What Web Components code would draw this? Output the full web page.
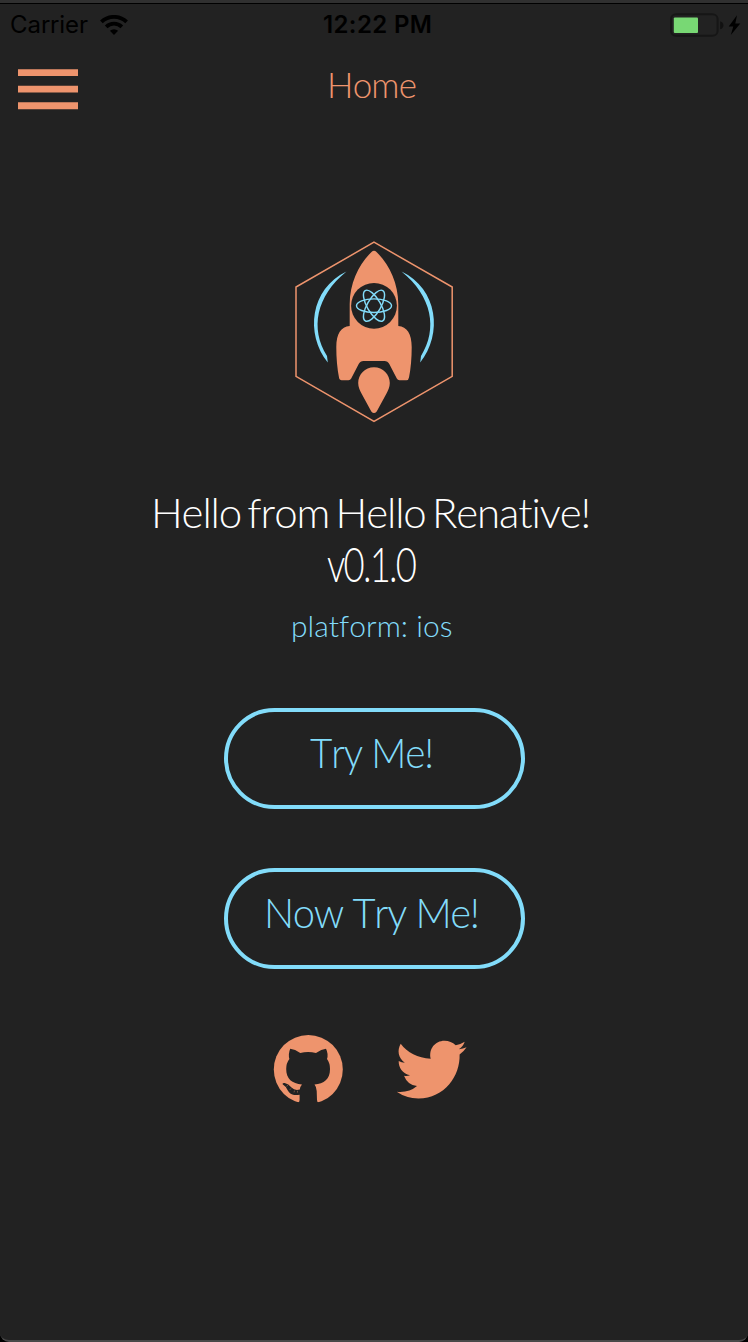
<!DOCTYPE html>
<html lang="en">
<head>
<meta charset="utf-8">
<title>Home</title>
<style>
html,body{margin:0;background:#000;height:100%}
</style>
</head>
<body>
<app-screen></app-screen>
<script>
const define = (name, html, init) => {
  const t = document.createElement('template');
  t.innerHTML = html;
  customElements.define(name, class extends HTMLElement {
    constructor() {
      super();
      this.attachShadow({mode: 'open'}).appendChild(t.content.cloneNode(true));
    }
    connectedCallback() { if (init) init(this); }
  });
};

/* One line of text, tracked so that it spans the given width.
   The optional scale attribute condenses the glyphs as well. */
define('fit-text', `<style>
:host{display:block;white-space:nowrap;font-kerning:none}
span{display:inline-block;transform-origin:0 50%}
</style><span><slot></slot></span>`, el => {
  const span = el.shadowRoot.querySelector('span');
  const gaps = el.textContent.length - 1;
  const width = Number(el.getAttribute('width'));
  const scale = Number(el.getAttribute('scale') || 1);
  const step = (width / scale - span.getBoundingClientRect().width) / gaps;
  span.style.letterSpacing = step + 'px';
  span.style.transform = scale === 1 ? 'none' : 'scaleX(' + scale + ')';
  el.style.width = width + 'px';
});

define('status-bar', `<style>
:host{display:flex;box-sizing:border-box;height:42px;padding:0 7px 0 10px;align-items:center;justify-content:space-between;font:24px/42px Inter,sans-serif;color:#000}
.side{display:flex;align-items:center;width:300px}
.end{justify-content:flex-end}
.time{font-weight:600;margin-left:4px}
svg{display:block}
.wifi{margin-left:11.500px}
</style>
<div class="side"><fit-text width="78">Carrier</fit-text>
<svg class="wifi" width="28" height="20" viewBox="0 0 28 20"><g fill="none" stroke="#000" stroke-width="3.8"><path d="M1.4 6.9a18.2 18.2 0 0 1 25.2 0"/><path d="M6.2 11.8a11.3 11.3 0 0 1 15.6 0"/></g><path d="M14 20l-4.1-4.2a6 6 0 0 1 8.2 0z"/></svg></div>
<fit-text class="time" width="109">12:22 PM</fit-text>
<div class="side end"><svg width="72" height="24" viewBox="0 0 72 24"><rect x="2" y="1.3" width="46.600" height="21.400" rx="5" fill="none" stroke="#161616" stroke-width="2"/><rect x="4.800" y="4.600" width="24.200" height="15.400" rx="1" fill="#78d874"/><path d="M51.200 8.200q3.200 1 3.200 4t-3.200 4z" fill="#111"/><path d="M68 2.200L59.700 13.500h4.600l-2.500 8.500 9.500-11.500h-5z"/></svg></div>`);

define('nav-bar', `<style>
:host{display:grid;grid-template-columns:60px 1fr 60px;height:86px;box-sizing:border-box;padding:17px 22px 0 18px;font:300 35px/42px Lato,sans-serif;color:#ee946d;justify-items:center}
svg{display:block;margin-top:6px}
</style>
<svg width="60" height="41" viewBox="0 0 60 41" fill="#ee946d"><path d="M0 .2h60v6.800H0zM0 16.700h60v6.800H0zM0 33.300h60v6.900H0z"/></svg>
<slot></slot>`);

define('rocket-logo', `<style>:host{display:block}svg{display:block}</style>
<svg width="180" height="200" viewBox="0 0 180 200">
<path d="M90 12.200L168.200 57V146.300L90 191.500 12 146.300V57z" fill="none" stroke="#ee946d" stroke-width="1.500"/>
<path d="M62.500 41.500C26 59 21 104 43.800 132.500L43 126C26 99 32 66 62.500 41.500zM117.500 41.500C154 59 159 104 136.200 132.500L137 126C154 99 148 66 117.500 41.500z" fill="#82dcfa"/>
<path d="M87.500 22q2.500-2.400 5 0C105 34 114.500 53 114.300 75V96C123 96.500 127.700 104 127.700 117Q127.700 134 125 147.500Q124.600 150.300 122.300 150.300H115.500Q113.700 150.300 112.800 148.600L105.300 134Q103.700 131 100.500 131H79.500Q76.300 131 74.700 134L67.200 148.600Q66.300 150.300 64.500 150.300H57.700Q55.400 150.300 55 147.500Q52.300 134 52.300 117C52.300 104 57 96.500 65.700 96V75C65.500 53 75 34 87.500 22z" fill="#ee946d"/>
<path d="M90 137.200C99 137.200 105.800 144.500 105.800 153C105.800 157.500 104 160.500 102.500 163.500L92.700 181.500Q90 184.600 87.300 181.500L77.500 163.500C76 160.500 74.200 157.500 74.200 153C74.200 144.500 81 137.200 90 137.200z" fill="#ee946d"/>
<circle cx="90" cy="75.800" r="22.900" fill="#222"/>
<g fill="none" stroke="#82dcfa" stroke-width="1.450"><ellipse cx="90" cy="75.700" rx="17.500" ry="6.800"/><ellipse cx="90" cy="75.700" rx="17.500" ry="6.800" transform="rotate(60 90 75.700)"/><ellipse cx="90" cy="75.700" rx="17.500" ry="6.800" transform="rotate(120 90 75.700)"/></g>
</svg>`);

define('pill-button', `<style>
:host{display:flex;justify-content:center;box-sizing:border-box;width:301px;height:101px;border:4px solid #82dcfa;border-radius:51px;padding:15px 5px 0 0;font:300 42px/50px Lato,sans-serif;color:#82dcfa}
</style><slot></slot>`);

define('github-icon', `<style>:host{display:block}svg{display:block}</style>
<svg width="90" height="90" viewBox="0 0 90 90"><circle cx="44.300" cy="44.500" r="34.500" fill="#ee946d"/>
<path d="M26.200 23.700Q31 24.300 36.300 28Q44 26.200 52 28Q57.500 24.300 62 23.700Q64.600 29 63 34Q66 38 66 44C66 54.500 60 58.500 50.500 59.600Q52.500 62 52.700 66L53 75Q53.100 78.500 56.200 77.200L54 82H34L32.800 77.200Q35.600 78.300 35.600 75V69.700C29 71 25.500 68.700 23.500 65Q22 61.500 18.600 59.300Q18.200 57.700 20.700 57.900Q24.500 58.800 27.500 62.500Q30.800 66 35.800 64.500Q36.200 61.500 38 59.600C28 58.500 22.200 54 22.200 44Q22.200 38 25.400 34Q24 29 26.200 23.700z" fill="#222"/>
<path d="M24 60.200l-1.500 1.200M27 63.400l-1.300 1.500M30.500 65.600l-.5 1.800M33.500 65.800v1.800" stroke="#ee946d" stroke-width=".4"/></svg>`);

define('twitter-icon', `<style>:host{display:block}svg{display:block}</style>
<svg width="90" height="90" viewBox="0 0 90 90"><path d="M14.700 18.700C21.500 27.500 31.500 33 44.700 33.700C42.500 24 49 15.700 58.500 15.700Q65 15.700 69.700 20.300Q74.500 19.400 78.700 16.700Q77.200 21.400 72.800 24.200Q77 23.800 80.600 22.200Q78 26.200 73.600 29.500C74.300 51 58.500 73.400 32.500 73.400Q20 73.300 10.700 66.800Q23 68 31 61Q21.500 60 18 50.700Q21 51.200 24 50.300C16.500 48.500 12.500 42.500 12.700 36Q15.500 37.500 18.800 37.800C12 32.500 11 25 14.700 18.700z" fill="#ee946d"/></svg>`);

define('app-screen', `<style>
:host{display:flex;flex-direction:column;box-sizing:border-box;width:748px;height:1342px;overflow:hidden;border-radius:0 0 9px 9px;background:#222;border-bottom:2px solid #494949}
.edge{height:4px;flex:none;background:linear-gradient(#303030 0 2.500px,#000 3px)}
main{display:flex;flex-direction:column;align-items:center}
rocket-logo{margin-top:98px}
h1,p{margin:0;padding-right:5px}
h1{font:300 42px/52px Lato,sans-serif;color:#fff;margin-top:56px;word-spacing:-4px}
.version{font:300 48px/52px Lato,sans-serif;color:#fff}
.platform{font:300 30px/36px Lato,sans-serif;color:#82dcfa;margin-top:17px}
.one{margin-top:65px}
.two{margin-top:59px}
nav{display:flex;gap:32px;margin-top:56px;padding-right:8px}
</style>
<div class="edge"></div>
<status-bar></status-bar>
<nav-bar><fit-text width="90">Home</fit-text></nav-bar>
<main>
<rocket-logo></rocket-logo>
<h1><fit-text width="441">Hello from Hello Renative!</fit-text></h1>
<p class="version"><fit-text width="90" scale="0.76">v0.1.0</fit-text></p>
<p class="platform"><fit-text width="161">platform: ios</fit-text></p>
<pill-button class="one"><fit-text width="124" scale="0.92">Try Me!</fit-text></pill-button>
<pill-button class="two"><fit-text width="216" scale="0.95">Now Try Me!</fit-text></pill-button>
<nav><github-icon></github-icon><twitter-icon></twitter-icon></nav>
</main>`);
</script>
</body>
</html>
